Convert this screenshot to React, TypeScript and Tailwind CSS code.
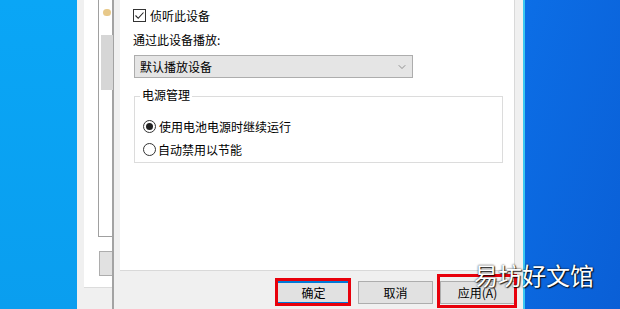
import { ChevronDown } from "lucide-react";

const font = { fontFamily: '"Noto Sans CJK SC", "Noto Sans", sans-serif' };

function WinButton({ label, primary }: { label: string; primary?: boolean }) {
  return (
    <button
      type="button"
      className={`w-[75px] h-[23px] text-[12px] leading-none text-black bg-[#e1e1e1] border ${
        primary ? "border-[#0078d7] border-2" : "border-[#adadad]"
      }`}
    >
      {label}
    </button>
  );
}

export default function App() {
  return (
    <div className="relative w-[620px] h-[309px] overflow-hidden flex" style={font}>
      {/* desktop left */}
      <div className="w-[77px] h-full bg-gradient-to-b from-[#0aa6f6] to-[#0a9eef]" />

      {/* window behind */}
      <div className="w-[35px] h-full bg-[#f0f0f0] pl-[7px]">
        <div className="h-[288px] bg-white border-b border-[#dcdcdc] pl-[14px] pt-0">
          <div className="relative h-[237px] border-l border-b border-[#a0a0a0] bg-white">
            <div className="absolute left-[4px] top-[9px] w-[8px] h-[7px] rounded-sm bg-[#e8c98a]" />
            <div className="absolute left-[2px] top-[35px] w-[12px] h-[55px] bg-[#d6d6d6]" />
          </div>
          <div className="mt-[14px] ml-[1px] h-[25px] bg-[#e1e1e1] border border-r-0 border-[#adadad]" />
        </div>
      </div>

      {/* dialog left border */}
      <div className="w-[2px] h-full bg-[#a3a3a3]" />

      {/* dialog */}
      <div className="w-[409px] h-full bg-[#f0f0f0] flex flex-col">
        <div className="ml-[6px] mr-[8px] h-[271px] bg-white border-r border-b border-[#d9d9d9] pl-[13px] text-[12px] text-black">
          <div className="flex items-center h-[13px] mt-[9px] gap-[4px]">
            <span className="w-[13px] h-[13px] border border-[#333] flex items-center justify-center">
              <svg width="11" height="11" viewBox="0 0 11 11">
                <path d="M1.5 5.5 L4.2 8.3 L9.5 2.5" fill="none" stroke="#222" strokeWidth="1.1" />
              </svg>
            </span>
            <span className="leading-none">侦听此设备</span>
          </div>

          <div className="mt-[12px] leading-none h-[12px]">通过此设备播放:</div>

          <div className="mt-[9px] ml-[1px] w-[279px] h-[23px] bg-[#e5e5e5] border border-[#adadad] flex items-center justify-between pl-[5px] pr-[4px]">
            <span className="leading-none">默认播放设备</span>
            <ChevronDown size={12} strokeWidth={1.2} className="text-[#555]" />
          </div>

          <div className="relative mt-[18px] ml-[1px] w-[369px] h-[67px] border border-[#dcdcdc]">
            <span className="absolute -top-[8px] left-[5px] bg-white px-[2px] leading-none">电源管理</span>
            <div className="flex items-center gap-[3px] mt-[23px] ml-[8px] h-[13px]">
              <span className="w-[13px] h-[13px] rounded-full border border-[#333] flex items-center justify-center">
                <span className="w-[7px] h-[7px] rounded-full bg-[#222]" />
              </span>
              <span className="leading-none">使用电池电源时继续运行</span>
            </div>
            <div className="flex items-center gap-[2px] mt-[10px] ml-[8px] h-[13px]">
              <span className="w-[13px] h-[13px] rounded-full border border-[#333]" />
              <span className="leading-none">自动禁用以节能</span>
            </div>
          </div>
        </div>

        <div className="flex justify-end gap-[7px] mr-[8px] mt-[10px]">
          <WinButton label="确定" primary />
          <WinButton label="取消" />
          <WinButton label="应用(A)" />
        </div>
      </div>

      {/* dialog right edge */}
      <div className="w-[2px] h-full bg-[#3cc8f0]" />

      {/* desktop right */}
      <div className="flex-1 h-full bg-gradient-to-br from-[#0c6ee6] to-[#0a5fd6]" />

      {/* annotations */}
      <div className="absolute left-[275px] top-[278px] w-[76px] h-[28px] border-[3px] border-[#e8000b]" />
      <div className="absolute left-[437px] top-[274px] w-[80px] h-[34px] border-[3px] border-[#e8000b]" />

      {/* watermark */}
      <div className="absolute left-[474px] top-[263px] text-[24px] leading-none text-white tracking-[0px] [text-shadow:0_0_2px_rgba(0,0,0,0.9),1px_1px_1px_rgba(0,0,0,0.8)]">
        易坊好文馆
      </div>
    </div>
  );
}
